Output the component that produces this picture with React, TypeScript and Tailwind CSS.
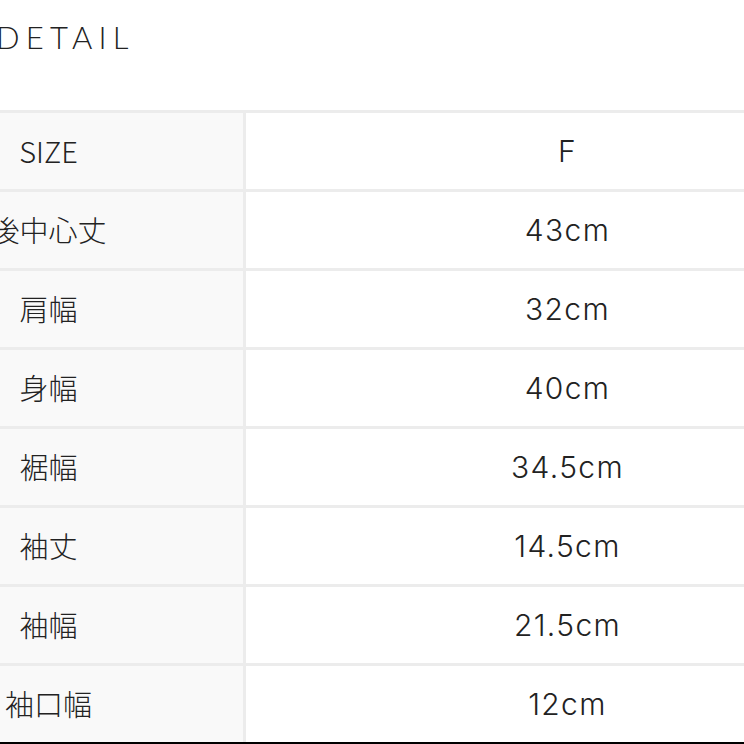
import React from "react";

const rows: [string, string][] = [
  ["SIZE", "F"],
  ["後中心丈", "43cm"],
  ["肩幅", "32cm"],
  ["身幅", "40cm"],
  ["裾幅", "34.5cm"],
  ["袖丈", "14.5cm"],
  ["袖幅", "21.5cm"],
  ["袖口幅", "12cm"],
];

export default function App() {
  return (
    <div className="w-[744px] h-[744px] overflow-hidden bg-white relative">
      <div className="-ml-[146px] w-[1033px]">
        <div className="h-[110px] pl-[142px] pt-[18px]">
          <h2
            className="text-[31px] leading-[38px] font-light tracking-[0.2em] text-[#222]"
            style={{ fontFamily: "Lato, 'Noto Sans', sans-serif" }}
          >
            DETAIL
          </h2>
        </div>
        <div className="border-t-[3px] border-[#ececec] grid grid-cols-[392px_641px]">
          {rows.map(([k, v]) => (
            <React.Fragment key={k}>
              <div
                className="h-[79px] bg-[#f9f9f9] border-r-[3px] border-b-[3px] border-[#ececec] flex items-center justify-center text-[29px] font-light text-[#222]"
                style={{ fontFamily: "'Noto Sans CJK JP', 'Noto Sans', sans-serif" }}
              >
                {k}
              </div>
              <div
                className="h-[79px] bg-white border-b-[3px] border-[#ececec] flex items-center justify-center pl-[2px] text-[30px] font-light tracking-[0.045em] text-[#222]"
                style={{ fontFamily: "Inter, 'Noto Sans', sans-serif" }}
              >
                {v}
              </div>
            </React.Fragment>
          ))}
        </div>
      </div>
      <div className="absolute left-0 right-0 bottom-0 h-[2px] bg-black" />
    </div>
  );
}
